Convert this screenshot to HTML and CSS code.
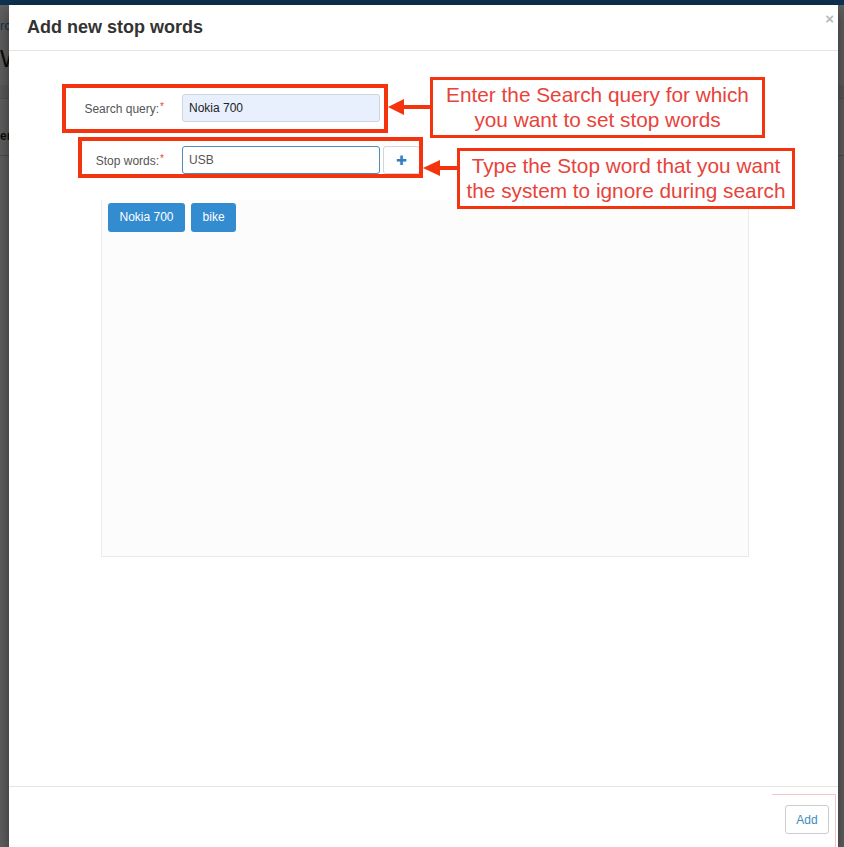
FILE: index.html
```html
<!DOCTYPE html>
<html lang="en">
<head>
    <meta charset="UTF-8">
    <title>Stop words</title>
    <link rel="stylesheet" href="styles.css">
</head>
<body>
    <!-- page behind the dialog -->
    <div class="page">
        <div class="topbar"></div>
        <div class="crumbs">rch</div>
        <div class="page-title">Words</div>
        <div class="toolbar"></div>
        <div class="table-head">er</div>
    </div>
    <div class="backdrop"></div>

    <div class="modal">
        <div class="modal-header">
            <h4 class="modal-title">Add new stop words</h4>
            <span class="close">&times;</span>
        </div>
        <div class="modal-body">
            <div class="form-row">
                <label class="form-label">Search query:<span class="req">*</span></label>
                <input class="field field-filled" type="text" value="Nokia 700">
            </div>
            <div class="form-row form-row-last">
                <label class="form-label">Stop words:<span class="req">*</span></label>
                <input class="field field-focus" type="text" value="USB">
                <button class="btn-plus" type="button">&#10010;</button>
            </div>
            <div class="tag-panel">
                <span class="tag">Nokia 700</span>
                <span class="tag">bike</span>
            </div>
        </div>
        <div class="modal-footer">
            <button class="btn-add" type="button">Add</button>
        </div>
    </div>

    <!-- help notes drawn over the form -->
    <div class="notes">
        <div class="mark mark-query"></div>
        <div class="mark mark-words"></div>
        <div class="callout callout-query">Enter the Search query for which<br>you want to set stop words</div>
        <div class="callout callout-words">Type the Stop word that you want<br>the system to ignore during search</div>
        <div class="ghost"></div>
        <svg class="arrows" width="844" height="847" viewBox="0 0 844 847">
            <line x1="402" y1="107" x2="432" y2="107" stroke="#f4330f" stroke-width="4"/>
            <polygon points="388,107 404,99 404,115" fill="#f4330f"/>
            <line x1="438" y1="168" x2="458" y2="168" stroke="#f4330f" stroke-width="4"/>
            <polygon points="423,168 440,160 440,176" fill="#f4330f"/>
        </svg>
    </div>
</body>
</html>
```

FILE: styles.css
```css
* {
    box-sizing: border-box;
}

body {
    margin: 0;
    width: 844px;
    height: 847px;
    overflow: hidden;
    position: relative;
    font-family: "Liberation Sans", Arial, sans-serif;
    background: #fff;
    color: #333;
}

/* background page */
.topbar {
    height: 5px;
    background: #2383d8;
}

.crumbs {
    padding-top: 13px;
    height: 40px;
    font-size: 13px;
    color: #3c8dbc;
}

.page-title {
    font-size: 24px;
    color: #222;
    height: 40px;
}

.toolbar {
    height: 14px;
    background: #eee;
    border-bottom: 1px solid #ddd;
}

.table-head {
    margin-top: 30px;
    padding-bottom: 12px;
    border-bottom: 1px solid #ccc;
    font-size: 12px;
    font-weight: bold;
    color: #222;
}

.backdrop {
    position: absolute;
    inset: 0;
    background: rgba(0, 0, 0, 0.62);
}

/* dialog */
.modal {
    position: absolute;
    left: 9px;
    top: 5px;
    width: 829px;
    height: 842px;
    background: #fff;
    display: flex;
    flex-direction: column;
    box-shadow: 0 5px 15px rgba(0, 0, 0, 0.5);
}

.modal-header {
    height: 46px;
    border-bottom: 1px solid #e5e5e5;
    display: flex;
    align-items: center;
    justify-content: space-between;
    padding: 0 4px 0 18px;
}

.modal-title {
    margin: 0;
    font-size: 18px;
    font-weight: bold;
    color: #333;
}

.close {
    align-self: flex-start;
    margin-top: 5px;
    font-size: 15px;
    font-weight: bold;
    color: #b8b8b8;
}

.modal-body {
    flex: 1;
    padding-top: 43px;
}

.form-row {
    display: flex;
    align-items: center;
    height: 28px;
    margin-bottom: 24px;
}

.form-row-last {
    margin-bottom: 26px;
}

.form-label {
    width: 173px;
    padding-right: 18px;
    text-align: right;
    font-size: 12px;
    color: #555;
}

.req {
    color: #dd4b39;
    font-size: 10px;
    vertical-align: 3px;
    margin-left: 1px;
}

.field {
    width: 198px;
    height: 28px;
    padding: 0 6px;
    border: 1px solid #ccc;
    border-radius: 3px;
    font-family: inherit;
    font-size: 12px;
    color: #222;
}

.field-filled {
    background: #e8f0fe;
    border-color: #d0d4dc;
}

.field-focus {
    border-color: #4f8db8;
    color: #555;
}

.btn-plus {
    margin-left: 3px;
    width: 37px;
    height: 28px;
    border: 1px solid #d5d5d5;
    border-radius: 3px;
    background: #fff;
    color: #2f7fc1;
    font-size: 13px;
    padding: 0;
}

.tag-panel {
    margin-left: 92px;
    width: 648px;
    height: 357px;
    padding: 3px 6px;
    display: flex;
    align-items: flex-start;
    gap: 6px;
    background: #fcfcfc;
    border-left: 1px solid #ebebeb;
    border-right: 1px solid #ebebeb;
    border-bottom: 1px solid #e8e8e8;
}

.tag {
    padding: 7px 11.5px;
    line-height: 15px;
    font-size: 12px;
    color: #fff;
    background: #338bd0;
    border-radius: 3px;
}

.modal-footer {
    border-top: 1px solid #e5e5e5;
    padding: 18px 9px 13px;
    display: flex;
    justify-content: flex-end;
}

.btn-add {
    width: 44px;
    height: 29px;
    padding: 0;
    border: 1px solid #ccc;
    border-radius: 3px;
    background: #fff;
    color: #3c8dbc;
    font-family: inherit;
    font-size: 12px;
}

/* help notes */
.notes .mark,
.notes .callout,
.notes .ghost,
.notes .arrows {
    position: absolute;
}

.mark {
    border: 4px solid #f4330f;
}

.mark-query {
    left: 62px;
    top: 84px;
    width: 326px;
    height: 49px;
}

.mark-words {
    left: 78px;
    top: 137px;
    width: 345px;
    height: 41px;
}

.callout {
    border: 3px solid #f4330f;
    background: #fff;
    color: #e8433a;
    font-family: "Liberation Sans", Arial, sans-serif;
    font-size: 20.8px;
    line-height: 25px;
    text-align: center;
    padding-top: 2px;
}

.callout-query {
    left: 430px;
    top: 77px;
    width: 335px;
    height: 61px;
}

.callout-words {
    left: 457px;
    top: 148px;
    width: 338px;
    height: 61px;
}

.ghost {
    left: 772px;
    top: 794px;
    width: 64px;
    height: 60px;
    border-top: 1px solid #f2c8c8;
    border-right: 1px solid #f2c8c8;
}

.arrows {
    left: 0;
    top: 0;
}
```
